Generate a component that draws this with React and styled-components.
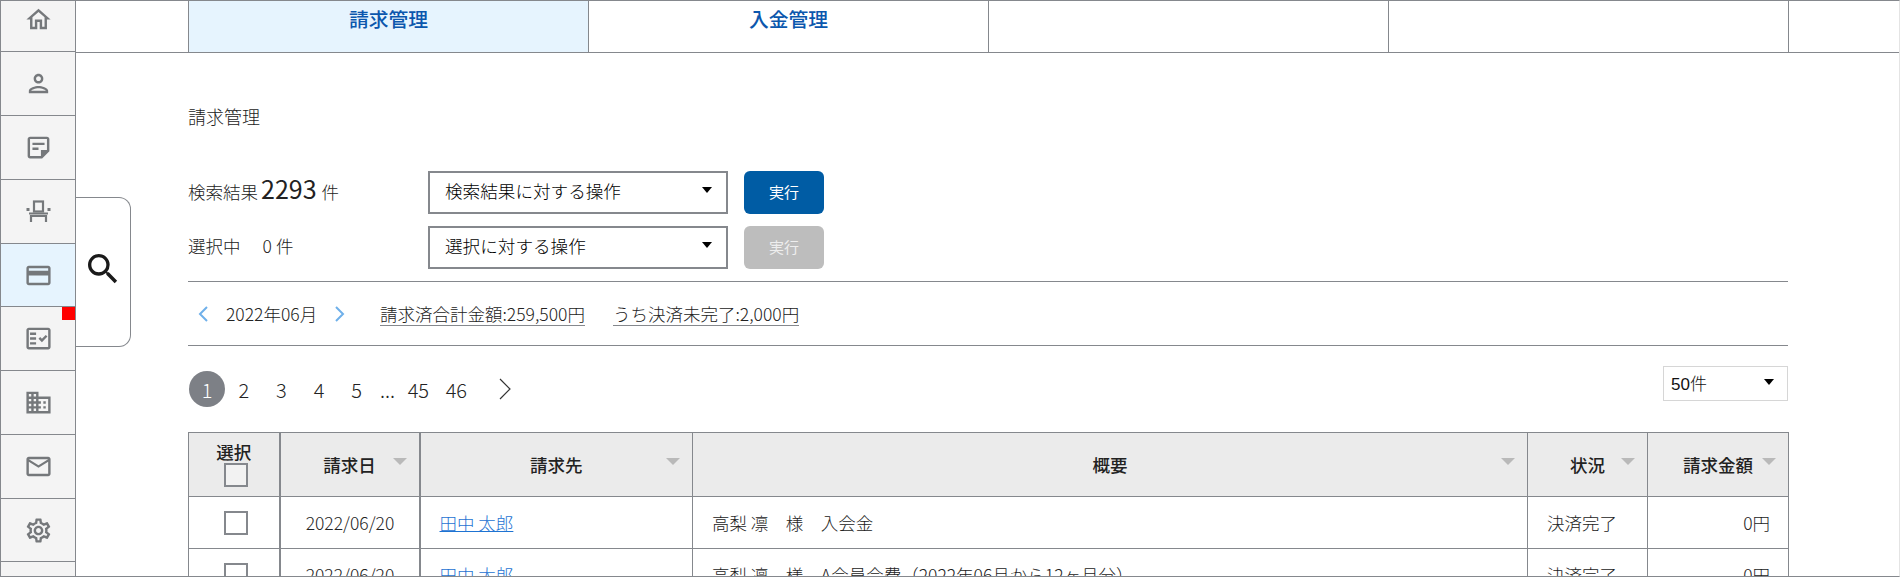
import styled, { createGlobalStyle } from "styled-components";
import {
    MdOutlineHome,
    MdOutlinePerson,
    MdOutlineStickyNote2,
    MdOutlineCreditCard,
    MdOutlineFactCheck,
    MdDomain,
    MdOutlineMailOutline,
    MdOutlineSettings,
    MdSearch,
} from "react-icons/md";

const GlobalStyle = createGlobalStyle`
    html, body {
        margin: 0;
        padding: 0;
        background: #fff;
    }
    body {
        font-family: "Noto Sans CJK JP", "Noto Sans", sans-serif;
        color: #222;
        font-size: 17.5px;
        font-weight: 300;
    }
    * {
        box-sizing: border-box;
    }
`;

const Shell = styled.div`
    position: relative;
    display: flex;
    height: 577px;
    overflow: hidden;
    border: 1px solid #85888d;
    border-right-color: #e4e4e4;
`;

const Sidebar = styled.nav`
    width: 75px;
    flex: none;
    background: #f4f4f4;
    border-right: 1px solid #85888d;
    overflow: hidden;
`;

const SideList = styled.div`
    margin-top: -13px;
`;

const SideItem = styled.div`
    position: relative;
    height: ${(p) => (p.$short ? 63 : 64)}px;
    display: flex;
    align-items: center;
    justify-content: center;
    border-bottom: 1px solid #85888d;
    background: ${(p) => (p.$active ? "#e6f4fe" : "#f4f4f4")};
    color: #75787b;
    font-size: 29px;
`;

const RedMark = styled.span`
    position: absolute;
    top: 0;
    right: 0;
    width: 13px;
    height: 13px;
    background: #f00;
`;

const SearchTab = styled.div`
    position: absolute;
    left: 75px;
    top: 196px;
    width: 55px;
    height: 150px;
    display: flex;
    align-items: center;
    justify-content: center;
    padding-bottom: 6px;
    background: #fff;
    border: 1px solid #85888d;
    border-left: none;
    border-radius: 0 12px 12px 0;
    color: #1a1a1a;
    font-size: 40px;
`;

const Main = styled.main`
    flex: 1;
    min-width: 0;
`;

const TabBar = styled.div`
    display: flex;
    height: 52px;
    padding-left: 112px;
    border-bottom: 1px solid #85888d;
`;

const Tab = styled.div`
    width: 400px;
    display: flex;
    align-items: center;
    justify-content: center;
    padding-bottom: 16px;
    border-left: 1px solid #85888d;
    background: ${(p) => (p.$active ? "#e6f4fe" : "#fff")};
    color: #0b57ad;
    font-size: 19.8px;
    font-weight: 500;
`;

const TabEnd = styled.div`
    width: 1px;
    background: #85888d;
`;

const Content = styled.div`
    width: 1712px;
    padding: 50px 0 0 112px;
`;

const Title = styled.h1`
    margin: 0 0 42px;
    font-size: 18px;
    font-weight: 300;
    line-height: 26px;
`;

const ActionRow = styled.div`
    display: flex;
    align-items: center;
    height: 43px;
    margin-bottom: 12px;
`;

const Count = styled.div`
    width: 240px;
    padding-bottom: 5px;
    white-space: nowrap;
`;

const BigNumber = styled.span`
    font-size: 25px;
    font-weight: 400;
    line-height: 1;
    margin: 0 5px 0 3px;
`;

const SmallNumber = styled.span`
    margin: 0 4px 0 22px;
`;

const ActionSelect = styled.div`
    position: relative;
    width: 300px;
    height: 43px;
    display: flex;
    align-items: center;
    padding: 0 0 4px 15px;
    border: 2px solid #85888d;
    color: #000;
    font-size: 17.6px;
`;

const Caret = styled.span`
    position: absolute;
    right: ${(p) => p.$right || 14}px;
    top: ${(p) => p.$top || 14}px;
    border-left: 5px solid transparent;
    border-right: 5px solid transparent;
    border-top: 6px solid #000;
`;

const RunButton = styled.button`
    width: 80px;
    height: 43px;
    margin-left: 16px;
    padding: 0 0 3px;
    border: none;
    border-radius: 6px;
    background: ${(p) => (p.disabled ? "#bdbdbd" : "#005ca4")};
    color: ${(p) => (p.disabled ? "#eee" : "#fff")};
    font-family: inherit;
    font-size: 15px;
    font-weight: 400;
`;

const Divider = styled.hr`
    margin: 0;
    border: none;
    border-top: 1px solid #85888d;
`;

const SummaryRow = styled.div`
    display: flex;
    align-items: center;
    height: 63px;
`;

const DateNav = styled.div`
    display: flex;
    align-items: center;
    width: 192px;
    padding-left: 8px;
`;

const NavArrow = styled.svg`
    width: 14px;
    height: 18px;
    flex: none;
    fill: none;
    stroke: #6fb0ea;
    stroke-width: 2;
`;

const DateText = styled.span`
    margin: 0 16px;
    white-space: nowrap;
`;

const SummaryItem = styled.span`
    margin-right: 28px;
    border-bottom: 1px solid #85888d;
    line-height: 23px;
    white-space: nowrap;
`;

const PagerRow = styled.div`
    display: flex;
    align-items: flex-start;
    justify-content: space-between;
    height: 86px;
    padding-top: 25px;
`;

const Pager = styled.div`
    display: flex;
    align-items: center;
    height: 36px;
    font-size: 20px;
`;

const PageNumber = styled.span`
    width: ${(p) => p.$w || 37.6}px;
    text-align: center;
    flex: none;
`;

const CurrentPage = styled.span`
    width: 36px;
    height: 36px;
    margin-left: 1px;
    flex: none;
    display: flex;
    align-items: center;
    justify-content: center;
    border-radius: 50%;
    background: #7d8086;
    color: #fff;
`;

const PagerNext = styled.svg`
    width: 14px;
    height: 22px;
    margin-left: 23px;
    fill: none;
    stroke: #333;
    stroke-width: 1.2;
`;

const PerPage = styled.div`
    position: relative;
    width: 125px;
    height: 35px;
    margin-top: -5px;
    display: flex;
    align-items: center;
    padding: 0 0 2px 7px;
    border: 1px solid #d6d6d6;
    color: #111;
    font-family: "Liberation Sans", "Noto Sans CJK JP", sans-serif;
    font-size: 17px;
`;

const Table = styled.table`
    width: 1600px;
    table-layout: fixed;
    border-collapse: collapse;
`;

const Th = styled.th`
    position: relative;
    height: 64px;
    padding: 0;
    background: #ebebeb;
    border: 1px solid #85888d;
    border-left-width: ${(p) => (p.$thick ? 2 : 1)}px;
    color: #222;
    font-size: 17.5px;
    font-weight: 500;
    line-height: 20px;
`;

const SortMark = styled.span`
    position: absolute;
    top: 25px;
    right: ${(p) => p.$right || 12}px;
    border-left: 7px solid transparent;
    border-right: 7px solid transparent;
    border-top: 7px solid #b9b9b9;
`;

const Td = styled.td`
    height: 52px;
    padding: 0 18px 0 19px;
    border: 1px solid #85888d;
    border-left-width: ${(p) => (p.$thick ? 2 : 1)}px;
    text-align: ${(p) => p.$align || "left"};
    white-space: nowrap;
`;

const CheckTd = styled(Td)`
    padding: 0;
`;

const CheckBox = styled.span`
    display: block;
    width: 24px;
    height: 24px;
    margin: ${(p) => (p.$header ? 1 : 0)}px 0 0 35px;
    border: 2px solid #85888d;
    background: ${(p) => (p.$header ? "#f2f2f2" : "#fff")};
`;

const PersonLink = styled.a`
    color: #1e73d2;
    text-decoration: underline;
`;

const sideIcons = [
    <MdOutlineHome key="home" />,
    <MdOutlinePerson key="person" />,
    <MdOutlineStickyNote2 key="note" />,
    <svg key="seat" width="29" height="29" viewBox="0 0 29 29" fill="none" stroke="currentColor" strokeWidth="2.2">
        <rect x="10" y="4.5" width="9" height="10" />
        <path d="M5 16.5h19M7 25v-6h15v6" />
        <path d="M2.5 12.5h3M23.5 12.5h3" strokeWidth="3" />
    </svg>,
    <MdOutlineCreditCard key="card" />,
    <MdOutlineFactCheck key="check" />,
    <MdDomain key="domain" />,
    <MdOutlineMailOutline key="mail" />,
    <MdOutlineSettings key="settings" />,
    null,
];

const rows = [
    { date: "2022/06/20", name: "田中 太郎", text: "高梨 凛　様　入会金", status: "決済完了", amount: "0円" },
    {
        date: "2022/06/20",
        name: "田中 太郎",
        text: "高梨 凛　様　A会員会費（2022年06月から12ヶ月分）",
        status: "決済完了",
        amount: "0円",
    },
];

const App = () => {
    return (
        <>
            <GlobalStyle />
            <Shell>
                <Sidebar>
                    <SideList>
                        {sideIcons.map((icon, i) => (
                            <SideItem key={i} $active={i === 4} $short={i === 4 || i === 8}>
                                {icon}
                                {i === 5 && <RedMark />}
                            </SideItem>
                        ))}
                    </SideList>
                </Sidebar>
                <SearchTab>
                    <MdSearch />
                </SearchTab>
                <Main>
                    <TabBar>
                        <Tab $active>請求管理</Tab>
                        <Tab>入金管理</Tab>
                        <Tab />
                        <Tab />
                        <TabEnd />
                    </TabBar>
                    <Content>
                        <Title>請求管理</Title>
                        <ActionRow>
                            <Count>
                                検索結果<BigNumber>2293</BigNumber>件
                            </Count>
                            <ActionSelect>
                                検索結果に対する操作
                                <Caret />
                            </ActionSelect>
                            <RunButton>実行</RunButton>
                        </ActionRow>
                        <ActionRow>
                            <Count>
                                選択中<SmallNumber>0</SmallNumber>件
                            </Count>
                            <ActionSelect>
                                選択に対する操作
                                <Caret />
                            </ActionSelect>
                            <RunButton disabled>実行</RunButton>
                        </ActionRow>
                        <Divider />
                        <SummaryRow>
                            <DateNav>
                                <NavArrow viewBox="0 0 14 18">
                                    <path d="M11 2 4 9l7 7" />
                                </NavArrow>
                                <DateText>2022年06月</DateText>
                                <NavArrow viewBox="0 0 14 18">
                                    <path d="m3 2 7 7-7 7" />
                                </NavArrow>
                            </DateNav>
                            <SummaryItem>請求済合計金額:259,500円</SummaryItem>
                            <SummaryItem>うち決済未完了:2,000円</SummaryItem>
                        </SummaryRow>
                        <Divider />
                        <PagerRow>
                            <Pager>
                                <CurrentPage>1</CurrentPage>
                                {[2, 3, 4, 5].map((n) => (
                                    <PageNumber key={n}>{n}</PageNumber>
                                ))}
                                <PageNumber $w={24}>...</PageNumber>
                                <PageNumber $w={38}>45</PageNumber>
                                <PageNumber $w={38}>46</PageNumber>
                                <PagerNext viewBox="0 0 14 22">
                                    <path d="m2 1 10 10L2 21" />
                                </PagerNext>
                            </Pager>
                            <PerPage>
                                50件
                                <Caret $right={13} $top={12} />
                            </PerPage>
                        </PagerRow>
                        <Table>
                            <colgroup>
                                <col width="91" />
                                <col width="140" />
                                <col width="273" />
                                <col width="835" />
                                <col width="120" />
                                <col width="141" />
                            </colgroup>
                            <thead>
                                <tr>
                                    <Th>
                                        選択
                                        <CheckBox $header />
                                    </Th>
                                    <Th $thick>
                                        請求日
                                        <SortMark />
                                    </Th>
                                    <Th $thick>
                                        請求先
                                        <SortMark />
                                    </Th>
                                    <Th>
                                        概要
                                        <SortMark />
                                    </Th>
                                    <Th>
                                        状況
                                        <SortMark />
                                    </Th>
                                    <Th>
                                        請求金額
                                        <SortMark />
                                    </Th>
                                </tr>
                            </thead>
                            <tbody>
                                {rows.map((row, i) => (
                                    <tr key={i}>
                                        <CheckTd>
                                            <CheckBox />
                                        </CheckTd>
                                        <Td $thick $align="center">
                                            {row.date}
                                        </Td>
                                        <Td $thick>
                                            <PersonLink>{row.name}</PersonLink>
                                        </Td>
                                        <Td>{row.text}</Td>
                                        <Td>{row.status}</Td>
                                        <Td $align="right">{row.amount}</Td>
                                    </tr>
                                ))}
                            </tbody>
                        </Table>
                    </Content>
                </Main>
            </Shell>
        </>
    );
};

export default App;
